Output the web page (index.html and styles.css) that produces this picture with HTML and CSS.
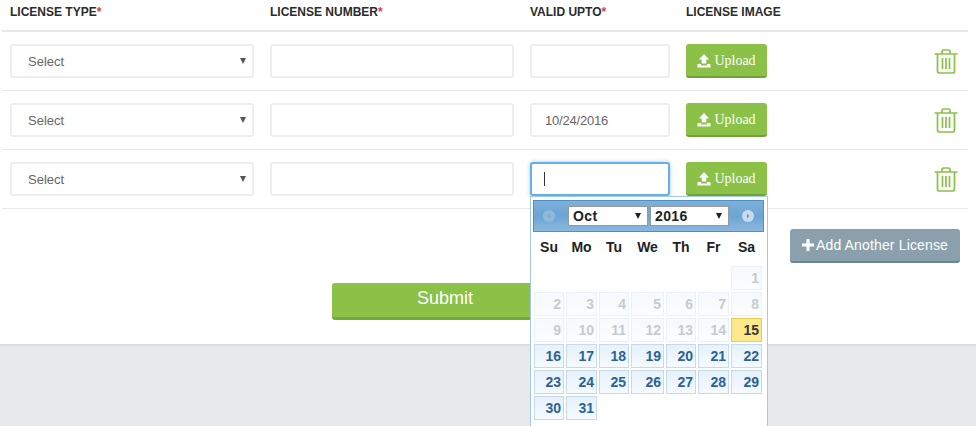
FILE: index.html
```html
<!DOCTYPE html>
<html lang="en">
<head>
  <meta charset="UTF-8" />
  <meta name="viewport" content="width=device-width, initial-scale=1.0"/>
  <title>Licenses</title>
  <link rel="stylesheet" href="styles.css">
</head>
<body>
  <main class="content">
    <div class="license-table">
      <div class="row head">
        <div class="label">LICENSE TYPE<span class="req">*</span></div>
        <div class="label">LICENSE NUMBER<span class="req">*</span></div>
        <div class="label">VALID UPTO<span class="req">*</span></div>
        <div class="label">LICENSE IMAGE</div>
      </div>

      <div class="row">
        <div class="select-box"><span>Select</span></div>
        <input class="field" type="text" />
        <input class="field" type="text" />
        <button class="upload" type="button">
          <svg viewBox="0 0 14 14" width="14" height="14"><path d="M7 0 12 5.500H9.300V9.500H4.700V5.500H2ZM0.500 10H4V11.500H10V10H13.500V13.500H0.500Z" fill="currentColor"/></svg>
          Upload
        </button>
        <svg class="trash" viewBox="0 0 24 25" width="24" height="25"><path d="M0.500 5H23.500M8 5V2.500Q8 1 9.500 1H14.500Q16 1 16 2.500V5M3.500 5V22Q3.500 24 5.500 24H18.500Q20.500 24 20.500 22V5M8.500 9V20M12 9V20M15.500 9V20" fill="none" stroke="currentColor" stroke-width="1.700"/></svg>
      </div>

      <div class="row">
        <div class="select-box"><span>Select</span></div>
        <input class="field" type="text" />
        <input class="field date" type="text" value="10/24/2016" />
        <button class="upload" type="button">
          <svg viewBox="0 0 14 14" width="14" height="14"><path d="M7 0 12 5.500H9.300V9.500H4.700V5.500H2ZM0.500 10H4V11.500H10V10H13.500V13.500H0.500Z" fill="currentColor"/></svg>
          Upload
        </button>
        <svg class="trash" viewBox="0 0 24 25" width="24" height="25"><path d="M0.500 5H23.500M8 5V2.500Q8 1 9.500 1H14.500Q16 1 16 2.500V5M3.500 5V22Q3.500 24 5.500 24H18.500Q20.500 24 20.500 22V5M8.500 9V20M12 9V20M15.500 9V20" fill="none" stroke="currentColor" stroke-width="1.700"/></svg>
      </div>

      <div class="row">
        <div class="select-box"><span>Select</span></div>
        <input class="field" type="text" />
        <div class="date-wrap">
          <div class="field focused"><span class="caret"></span></div>
          <div class="calendar">
            <div class="cal-head">
              <svg class="cal-nav prev" viewBox="0 0 12 12" width="12" height="12"><circle cx="6" cy="6" r="6" fill="#8fb8db"/><path d="M7 3.500 4.500 6 7 8.500Z" fill="#6fa3cf"/></svg>
              <div class="cal-selects">
                <div class="cal-select month">Oct</div>
                <div class="cal-select year">2016</div>
              </div>
              <svg class="cal-nav" viewBox="0 0 12 12" width="12" height="12"><circle cx="6" cy="6" r="6" fill="#c9dcee"/><path d="M5 3.500 7.500 6 5 8.500Z" fill="#5c9ccc"/></svg>
            </div>
            <div class="cal-grid">
              <div class="dow">Su</div><div class="dow">Mo</div><div class="dow">Tu</div><div class="dow">We</div><div class="dow">Th</div><div class="dow">Fr</div><div class="dow">Sa</div>
              <div></div><div></div><div></div><div></div><div></div><div></div>
              <div class="day off">1</div>
              <div class="day off">2</div><div class="day off">3</div><div class="day off">4</div><div class="day off">5</div><div class="day off">6</div><div class="day off">7</div><div class="day off">8</div>
              <div class="day off">9</div><div class="day off">10</div><div class="day off">11</div><div class="day off">12</div><div class="day off">13</div><div class="day off">14</div><div class="day today">15</div>
              <div class="day">16</div><div class="day">17</div><div class="day">18</div><div class="day">19</div><div class="day">20</div><div class="day">21</div><div class="day">22</div>
              <div class="day">23</div><div class="day">24</div><div class="day">25</div><div class="day">26</div><div class="day">27</div><div class="day">28</div><div class="day">29</div>
              <div class="day">30</div><div class="day">31</div>
            </div>
          </div>
        </div>
        <button class="upload" type="button">
          <svg viewBox="0 0 14 14" width="14" height="14"><path d="M7 0 12 5.500H9.300V9.500H4.700V5.500H2ZM0.500 10H4V11.500H10V10H13.500V13.500H0.500Z" fill="currentColor"/></svg>
          Upload
        </button>
        <svg class="trash" viewBox="0 0 24 25" width="24" height="25"><path d="M0.500 5H23.500M8 5V2.500Q8 1 9.500 1H14.500Q16 1 16 2.500V5M3.500 5V22Q3.500 24 5.500 24H18.500Q20.500 24 20.500 22V5M8.500 9V20M12 9V20M15.500 9V20" fill="none" stroke="currentColor" stroke-width="1.700"/></svg>
      </div>
    </div>

    <div class="add-line">
      <button class="add" type="button">
        <svg viewBox="0 0 12 12" width="12" height="12"><path d="M4.500 0H7.500V4.500H12V7.500H7.500V12H4.500V7.500H0V4.500H4.500Z" fill="currentColor"/></svg>
        Add Another License
      </button>
    </div>

    <div class="submit-line">
      <button class="submit" type="submit">Submit</button>
    </div>
  </main>
  <footer class="footer"></footer>
</body>
</html>
```

FILE: styles.css
```css
html, body {
  height: 426px;
  overflow: hidden;
}
body {
  margin: 0;
  font-family: "Liberation Sans", Arial, sans-serif;
  background: #e6eaed;
}
button {
  font-family: inherit;
  cursor: pointer;
}
.content {
  background: white;
  height: 346px;
  padding: 0 8px 0 2px;
  box-sizing: border-box;
  border-bottom: 2px solid #dcdfe2;
}
.row {
  display: grid;
  grid-template-columns: 244px 244px 140px 82px 1fr;
  column-gap: 16px;
  align-items: center;
  height: 58px;
  padding: 0 8px;
  border-bottom: 1px solid #e8e8e8;
}
.row.head {
  height: 30px;
  border-bottom: 2px solid #e8e8e8;
}
.label {
  font-size: 12px;
  font-weight: bold;
  color: #2b2b2b;
  white-space: nowrap;
  padding-bottom: 6px;
}
.req {
  color: #e0344c;
}
.field,
.select-box {
  box-sizing: border-box;
  width: 100%;
  height: 34px;
  margin: 0;
  border: 2px solid #eeeeee;
  border-radius: 3px;
  background: white;
  font-family: inherit;
  font-size: 13px;
  color: #666;
}
.date {
  padding: 0 13px;
  letter-spacing: -0.2px;
}
.select-box {
  display: flex;
  align-items: center;
  position: relative;
  padding-left: 16px;
}
.select-box::after {
  content: "";
  position: absolute;
  right: 6px;
  top: 12px;
  border-left: 3px solid transparent;
  border-right: 3px solid transparent;
  border-top: 6px solid #555;
}
.date-wrap {
  position: relative;
}
.focused {
  border-color: #66afe9;
  display: flex;
  align-items: center;
  padding-left: 12px;
  box-shadow: 0 0 4px rgba(102,175,233,0.6);
}
.caret {
  width: 1px;
  height: 14px;
  background: #333;
}
.upload {
  box-sizing: border-box;
  width: 81px;
  height: 34px;
  display: flex;
  align-items: center;
  justify-content: center;
  gap: 3px;
  padding: 2px 0 0;
  border: none;
  border-bottom: 2px solid #6fa336;
  border-radius: 3px;
  background: #8bc147;
  color: white;
  font-family: "Liberation Serif", serif;
  font-size: 14px;
}
.trash {
  justify-self: end;
  margin-right: 2px;
  color: #8bc147;
}
.calendar {
  position: absolute;
  z-index: 5;
  top: 34px;
  left: 0;
  box-sizing: border-box;
  width: 238px;
  padding: 3px 3px 8px 2px;
  background: white;
  border: 1px solid #a6c9e2;
}
.cal-head {
  display: flex;
  align-items: center;
  justify-content: space-between;
  height: 32px;
  padding: 0 9px;
  background: linear-gradient(#7db0da, #6aa5d4 50%, #8ab8de);
  border: 1px solid #4f8fc4;
  box-sizing: border-box;
}
.cal-selects {
  display: flex;
  gap: 2px;
}
.cal-select {
  box-sizing: border-box;
  position: relative;
  height: 20px;
  padding-left: 4px;
  background: white;
  border: 1px solid #999;
  font-size: 14px;
  font-weight: bold;
  line-height: 18px;
  letter-spacing: 0.4px;
  color: #222;
}
.cal-select::after {
  content: "";
  position: absolute;
  right: 6px;
  top: 6px;
  border-left: 3px solid transparent;
  border-right: 3px solid transparent;
  border-top: 6px solid #222;
}
.month {
  width: 80px;
}
.year {
  width: 79px;
}
.cal-grid {
  display: grid;
  grid-template-columns: 30px 31px 30px 33px 30px 31px 31px;
  grid-template-rows: 32px repeat(6, 24px);
  gap: 2px;
  margin: 0 1px;
}
.dow {
  line-height: 30px;
  text-align: center;
  font-size: 14px;
  font-weight: bold;
  color: #222;
}
.day {
  box-sizing: border-box;
  padding-right: 2px;
  border: 1px solid #c5dbec;
  background: linear-gradient(#e6f1fb, #f5fafe);
  color: #2b6396;
  font-size: 14px;
  font-weight: bold;
  line-height: 22px;
  text-align: right;
}
.day.off {
  color: #5b6b77;
  opacity: 0.35;
}
.day.today {
  border-color: #ecc94f;
  background: #fce98c;
  color: #363636;
}
.add-line {
  display: flex;
  justify-content: flex-end;
  padding-top: 20px;
  padding-right: 8px;
}
.add {
  box-sizing: border-box;
  width: 170px;
  height: 34px;
  display: flex;
  align-items: center;
  justify-content: center;
  gap: 2px;
  padding: 0;
  border: none;
  border-bottom: 2px solid #6d8792;
  border-radius: 3px;
  background: #8aa0ac;
  color: white;
  font-size: 14px;
  letter-spacing: 0.15px;
}
.submit-line {
  padding-top: 20px;
  padding-left: 330px;
}
.submit {
  width: 226px;
  height: 37px;
  padding: 0 0 3px;
  border: none;
  border-bottom: 3px solid #74a83a;
  border-radius: 3px;
  background: #8bc147;
  color: white;
  font-size: 18px;
}
.footer {
  height: 80px;
}
```
